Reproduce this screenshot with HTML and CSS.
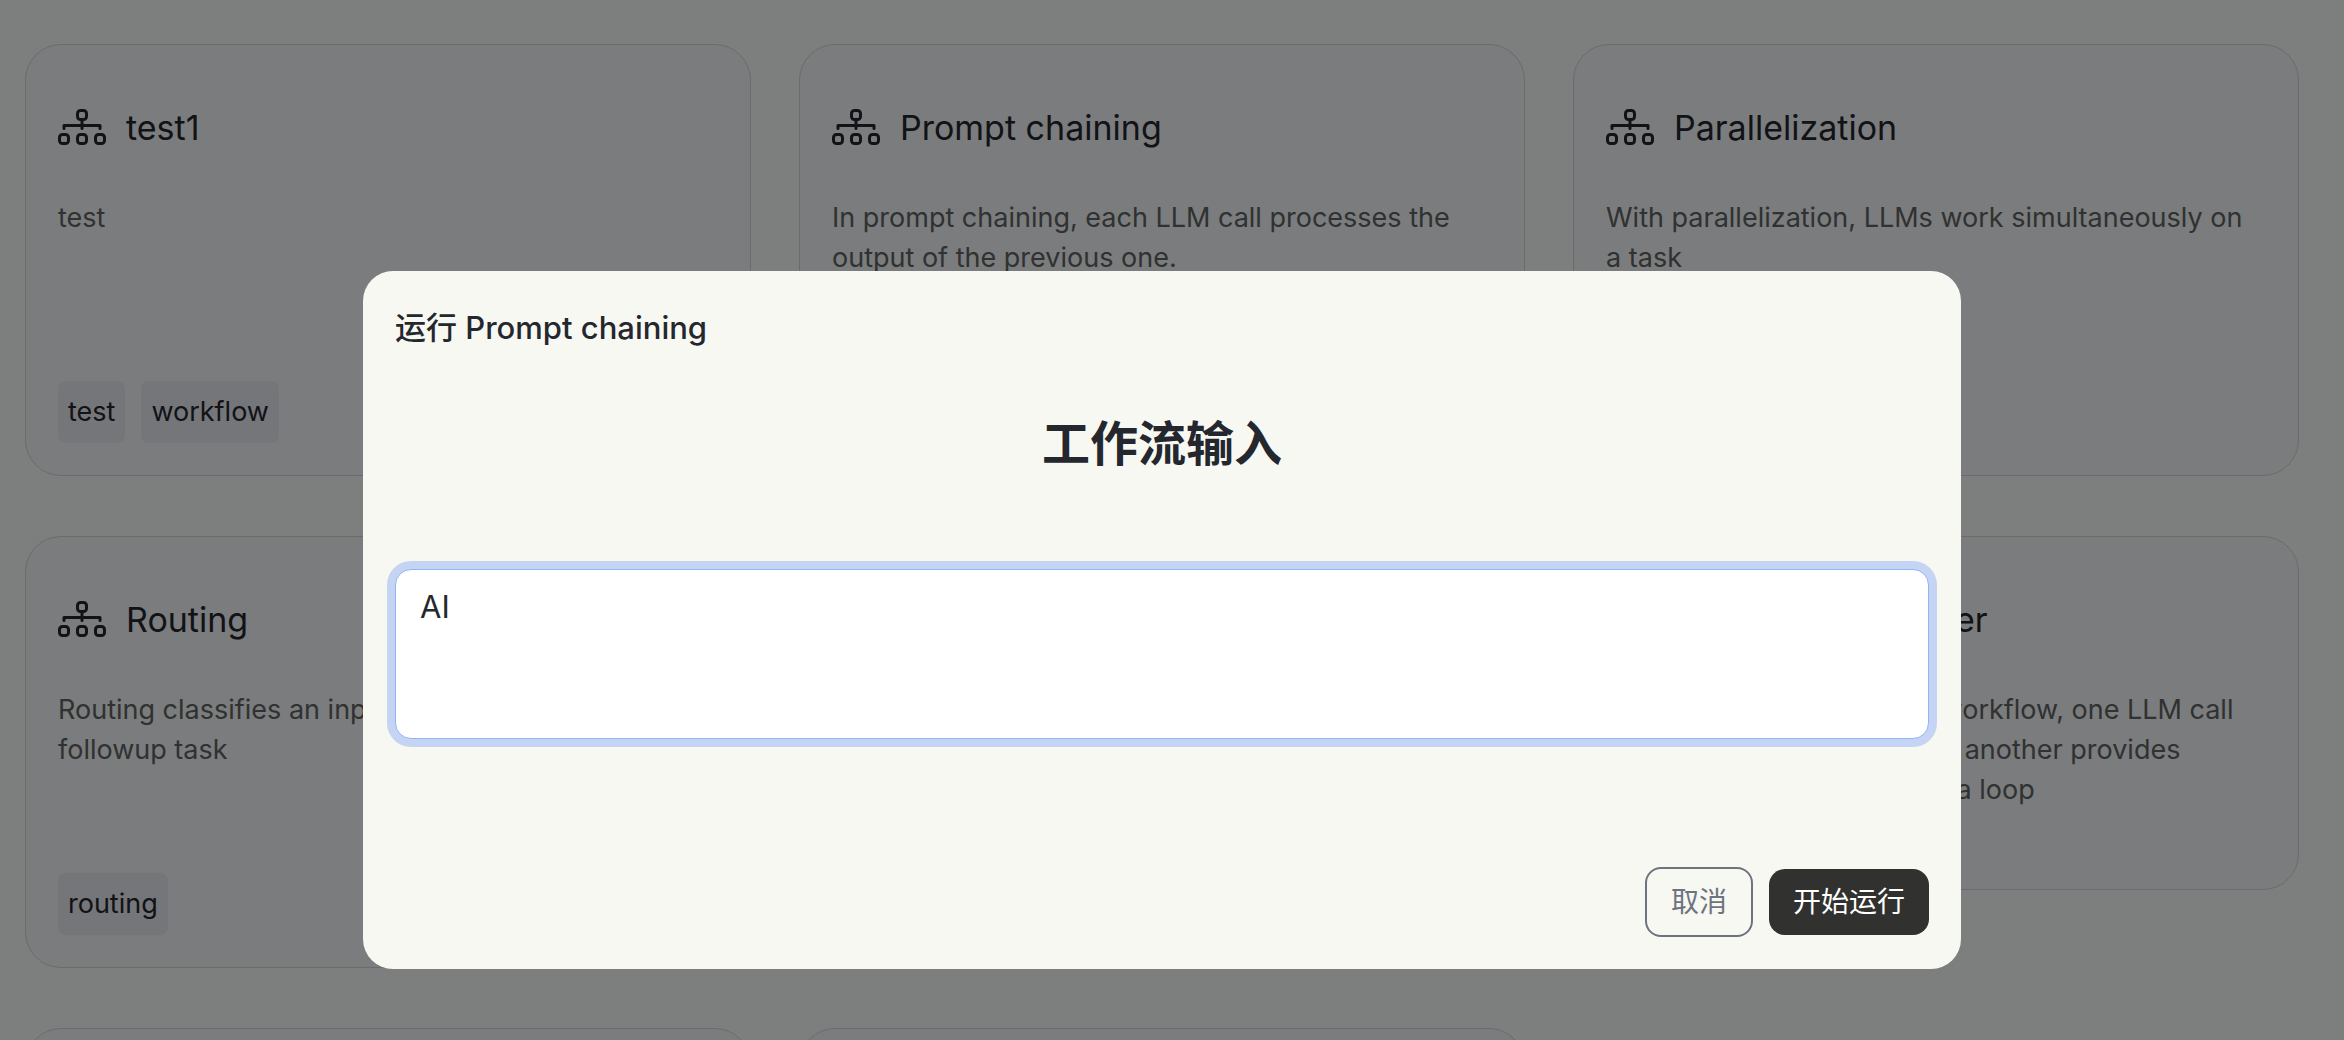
FILE: index.html
```html
<!DOCTYPE html>
<html lang="zh-CN">
<head>
    <meta charset="UTF-8">
    <title>工作流</title>
    <meta name="viewport" content="width=device-width,initial-scale=1">
    <link rel="stylesheet" href="styles.css">
</head>
<body>
<svg class="sprite" aria-hidden="true">
    <symbol id="flow" viewBox="0 0 48 36">
        <g fill="none" stroke="currentColor" stroke-width="3" stroke-linecap="round" stroke-linejoin="round">
            <rect x="19.5" y="1.5" width="9" height="9" rx="3"/>
            <rect x="1.5" y="25.5" width="9" height="9" rx="3"/>
            <rect x="19.5" y="25.5" width="9" height="9" rx="3"/>
            <rect x="37.5" y="25.5" width="9" height="9" rx="3"/>
            <path d="M24 11v8.500M6 19.500v-3h36v3"/>
        </g>
    </symbol>
</svg>
<main class="card-list">
    <article class="card">
        <h2 class="card-title"><svg class="icon"><use href="#flow"/></svg>test1</h2>
        <p class="card-desc">test</p>
        <div class="tags"><span class="tag">test</span><span class="tag">workflow</span></div>
    </article>
    <article class="card">
        <h2 class="card-title"><svg class="icon"><use href="#flow"/></svg>Prompt chaining</h2>
        <p class="card-desc">In prompt chaining, each LLM call processes the output of the previous one.</p>
        <div class="tags"><span class="tag">chaining</span></div>
    </article>
    <article class="card">
        <h2 class="card-title"><svg class="icon"><use href="#flow"/></svg>Parallelization</h2>
        <p class="card-desc">With parallelization, LLMs work simultaneously on a task</p>
        <div class="tags"><span class="tag">parallel</span></div>
    </article>
    <article class="card">
        <h2 class="card-title"><svg class="icon"><use href="#flow"/></svg>Routing</h2>
        <p class="card-desc">Routing classifies an input and directs it to a followup task</p>
        <div class="tags"><span class="tag">routing</span></div>
    </article>
    <article class="card">
        <h2 class="card-title"><svg class="icon"><use href="#flow"/></svg>Orchestrator</h2>
        <p class="card-desc">A central LLM breaks down tasks and delegates them</p>
        <div class="tags"><span class="tag">workers</span></div>
    </article>
    <article class="card">
        <h2 class="card-title"><svg class="icon"><use href="#flow"/></svg>Evaluator-optimizer</h2>
        <p class="card-desc">In the evaluator-optimizer workflow, one LLM call generates a response while another provides evaluation and feedback in a loop</p>
    </article>
    <article class="card"></article>
    <article class="card"></article>
</main>
<div class="mask">
    <form class="modal" role="dialog" aria-modal="true" aria-labelledby="modal-title">
        <h3 class="modal-title" id="modal-title">运行 Prompt chaining</h3>
        <label class="modal-label" for="flow-input">工作流输入</label>
        <textarea class="modal-input" id="flow-input">AI</textarea>
        <div class="modal-btns">
            <button class="btn btn-cancel" type="button">取消</button>
            <button class="btn btn-run" type="button">开始运行</button>
        </div>
    </form>
</div>
</body>
</html>
```
FILE: styles.css
```css
*{ box-sizing: border-box; }
body,h2,h3,p{ margin: 0; }
body{ background-color: #f9fefa; font-family: Inter,"Noto Sans CJK SC",sans-serif; color: #24272e; }
.sprite{ display: none; }

.card-list{ display: grid; grid-template-columns: repeat(3,1fr); grid-auto-rows: max-content; align-items: start; gap: 60px 48px;
            height: 100vh; overflow: hidden; padding: 44px 45px 0 25px; }
.card{ min-height: 354px; padding: 32px; border: 1px solid #d4d6d4; border-radius: 36px; background-color: #f7f8fb; }
.card-title{ display: flex; align-items: center; gap: 20px; height: 100px; font-size: 34px; font-weight: 400; color: #24272e; }
.icon{ width: 48px; height: 36px; }
.card-desc{ min-height: 167px; margin-top: 21px; padding-right: 8px; font-size: 27px; line-height: 40px; color: #606462; }
.tags{ display: flex; gap: 16px; margin-top: 16px; }
.tag{ padding: 0 10px; border-radius: 8px; background-color: #ebecf3; font-size: 27px; line-height: 62px; }

.mask{ position: fixed; top: 0; right: 0; bottom: 0; left: 0; display: flex; justify-content: center; align-items: flex-start;
       padding: 271px 20px 0 0; background-color: rgba(0,0,0,.5); }
.modal{ display: flex; flex-direction: column; width: 90%; max-width: 1598px; padding: 32px; border-radius: 30px; background-color: #f7f8f2; }
.modal-title{ font-size: 31px; font-weight: 500; line-height: 50px; }
.modal-label{ margin: 55px 0 89px; font-size: 48px; font-weight: 700; line-height: 72px; text-align: center; }
.modal-input{ height: 170px; padding: 13px 24px; border: 1px solid #8fb4fb; border-radius: 16px; outline: none; resize: none;
              background-color: #fff; box-shadow: 0 0 0 8px #c5d4f3; font: 400 31px/48px Inter,"Noto Sans CJK SC",sans-serif; color: #24272e; }
.modal-btns{ display: flex; justify-content: flex-end; align-items: center; gap: 16px; margin-top: 128px; }
.btn{ padding: 12px 24px; border: 0; border-radius: 16px; font: 400 28px/42px Inter,"Noto Sans CJK SC",sans-serif; }
.btn-cancel{ border: 2px solid #6d7480; background-color: transparent; color: #6d7480; }
.btn-run{ background-color: #31312f; color: #fff; }
```
